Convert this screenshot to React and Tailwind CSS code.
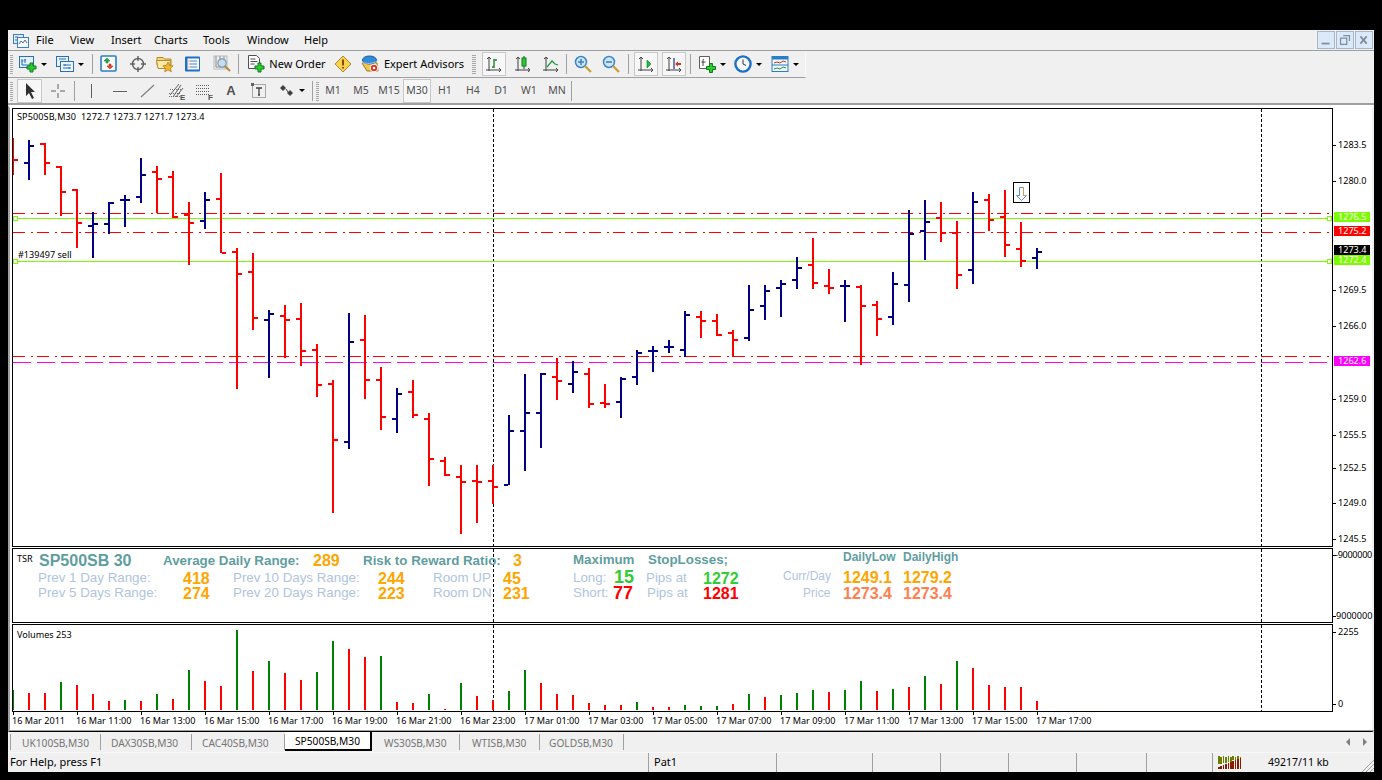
import React from 'react';

// x, high, low, open, close in screen px
const BARS = [
  [13,138,175,160,160],[29,140,180,163,146],[45,143,175,144,163],[61,166,216,167,192],[77,189,248,190,223],
  [93,212,258,226,224],[109,202,234,224,203],[125,195,227,200,200],[141,158,203,197,175],[157,166,213,172,179],
  [173,171,218,177,217],[189,202,265,215,223],[205,192,229,221,200],[221,173,253,199,253],[237,248,389,252,274],
  [253,253,330,272,318],[269,310,378,320,314],[285,305,358,316,320],[301,303,366,319,351],[317,344,397,350,385],
  [333,380,513,384,440],[349,313,449,442,342],[365,315,399,340,380],[381,367,430,380,417],[397,388,433,419,394],
  [413,380,418,392,415],[429,413,486,419,459],[445,457,476,461,475],[461,465,534,477,482],[477,465,523,481,482],
  [493,465,504,481,487],[509,415,485,485,431],[525,374,471,431,413],[541,373,448,413,374],[557,358,400,377,381],
  [573,361,393,384,372],[589,368,408,374,404],[605,384,408,403,404],[621,377,418,402,379],[637,350,385,377,353],
  [653,346,372,351,351],[669,340,353,347,347],[685,311,357,350,315],[701,311,338,317,321],[717,314,336,321,335],
  [733,330,357,333,340],[749,285,341,338,310],[765,285,320,306,291],[781,280,317,288,284],[797,257,289,280,268],
  [813,238,289,265,283],[829,269,294,286,288],[845,280,322,286,286],[861,285,365,287,306],[877,301,336,305,319],
  [893,272,325,317,284],[909,210,302,285,234],[925,200,260,231,222],[941,202,242,218,233],[957,221,289,233,275],
  [973,192,284,270,202],[989,194,231,200,220],[1005,190,257,217,245],[1021,222,267,249,261],[1037,248,269,258,252],
];

// top y of each volume bar, g = green
const VOLS = [
  [690,1],[693,0],[693,0],[682,1],[685,0],[694,0],[701,0],[700,1],[701,0],[694,1],[699,0],[670,1],[681,0],[686,0],
  [630,1],[671,0],[661,1],[673,0],[680,0],[672,1],[641,1],[649,0],[657,0],[656,1],[702,0],[703,0],[694,1],[709,0],
  [683,1],[696,0],[700,0],[691,1],[670,1],[683,0],[694,0],[695,0],[703,0],[705,0],[705,0],[702,1],[707,0],[707,0],
  [705,1],[706,1],[706,1],[704,0],[694,1],[697,0],[695,1],[693,1],[690,1],[692,0],[690,1],[681,1],[691,0],[689,1],
  [687,0],[676,1],[684,0],[661,1],[668,0],[685,0],[687,0],[687,0],[701,0],
];

const PRICE_LABELS = [
  ['1283.5',145],['1280.0',181],['1269.5',290],['1266.0',326],['1259.0',399],['1255.5',435],['1252.5',468],['1249.0',503],['1245.5',539],
];
const PRICE_BADGES = [
  ['1276.5',212,'bg-[#7cfc00]'],['1275.2',226,'bg-[#ff0000]'],['1273.4',245,'bg-black'],['1272.4',255,'bg-[#7cfc00]'],['1262.6',356,'bg-[#ff00ff]'],
];
const TIMES = [
  '16 Mar 2011','16 Mar 11:00','16 Mar 13:00','16 Mar 15:00','16 Mar 17:00','16 Mar 19:00','16 Mar 21:00','16 Mar 23:00',
  '17 Mar 01:00','17 Mar 03:00','17 Mar 05:00','17 Mar 07:00','17 Mar 09:00','17 Mar 11:00','17 Mar 13:00','17 Mar 15:00','17 Mar 17:00',
];

const UI = "font-['Noto_Sans',sans-serif]";
const ARIAL = "font-['Liberation_Sans',Arial,sans-serif]";

// ---- toolbar icons ----
const Ico = ({ children, w = 18, h = 18 }) => (
  <svg className="shrink-0" width={w} height={h} viewBox={`0 0 ${w} ${h}`}>{children}</svg>
);
const Plus = ({ x = 0, y = 0 }) => (
  <path transform={`translate(${x} ${y})`} d="M3.5.5h3v3h3v3h-3v3h-3v-3h-3v-3h3z" fill="#2ecb2e" stroke="#0b7d1a" />
);
const Caret = () => <span className="ml-[4px] h-0 w-0 shrink-0 border-x-[3px] border-t-[3px] border-x-transparent border-t-black" />;
const Axes = ({ children }) => (
  <Ico w={20} h={18}>
    <path d="M5 2v14M2 15h15M5 2l-2 2M5 2l2 2M17 15l-2-2M17 15l-2 2" stroke="#404040" fill="none" />
    {children}
  </Ico>
);

const IcoApp = () => (
  <Ico w={16} h={16}>
    <rect x=".5" y="2.5" width="10" height="9" fill="#dfeafa" stroke="#3f7fc0" />
    <rect x="4.5" y="5.5" width="11" height="10" fill="#f4f8fd" stroke="#3f7fc0" />
    <path d="M6 12l2-3 2 2 2-3 2 3" stroke="#4a6fa0" fill="none" />
    <path d="M2 5h3M2 8h2" stroke="#4a6fa0" />
  </Ico>
);
const IcoNewChart = () => (
  <Ico>
    <rect x=".5" y="1.5" width="14" height="11" fill="#e6f0fb" stroke="#2a6fb4" />
    <path d="M3 4v6M3 10h9M2.5 6h2M6 4v4M5 5h2" stroke="#2a6fb4" fill="none" />
    <Plus x="7.5" y="7.5" />
  </Ico>
);
const IcoProfiles = () => (
  <Ico>
    <rect x=".5" y="1.5" width="12" height="10" fill="#e6f0fb" stroke="#2a6fb4" />
    <rect x="4.5" y="6.5" width="13" height="10" fill="#eef5fd" stroke="#2a6fb4" />
    <path d="M3 4h7M7 10h8M7 13h8M9 9v2M13 12v2" stroke="#2a6fb4" fill="none" />
  </Ico>
);
const IcoMarket = () => (
  <Ico>
    <rect x="1" y="1" width="15" height="15" rx="1" fill="#f6f9fd" stroke="#2a7fc4" strokeWidth="1.6" />
    <path d="M7 3l3 3H8v2H6V6H4z" fill="#1fae3a" stroke="#0b7d1a" strokeWidth=".5" />
    <path d="M10 14l3-3h-2V9H9v2H7z" fill="#e8452c" stroke="#a82010" strokeWidth=".5" />
  </Ico>
);
const IcoNav = () => (
  <Ico>
    <circle cx="9" cy="9" r="5.5" fill="none" stroke="#606060" strokeWidth="1.4" />
    <path d="M9 1v5M9 12v5M1 9h5M12 9h5" stroke="#606060" strokeWidth="1.4" />
  </Ico>
);
const IcoFolder = () => (
  <Ico>
    <path d="M1 5V2.5h6L8.5 4H15v6H1z" fill="#f6d67a" stroke="#b48a2a" />
    <path d="M.5 5.5h14l-1 8H2z" fill="#fbe9a8" stroke="#b48a2a" />
    <path d="M12 7l1.6 3.4 3.6.4-2.7 2.4.8 3.6-3.3-1.9-3.3 1.9.8-3.6-2.7-2.4 3.6-.4z" fill="#f4b52a" stroke="#a87810" strokeWidth=".7" />
  </Ico>
);
const IcoTerminal = () => (
  <Ico>
    <rect x="1" y="1.5" width="15" height="15" rx="1" fill="#1f6fc4" />
    <rect x="3.5" y="3.5" width="11.5" height="11" fill="#f7fafe" />
    <path d="M6 6h7M6 9h7M6 12h7" stroke="#4a86c8" />
    <path d="M4.5 6h1M4.5 9h1M4.5 12h1" stroke="#e04a30" />
  </Ico>
);
const IcoTester = () => (
  <Ico>
    <path d="M3 1v11h10" stroke="#8a8a8a" fill="none" />
    <path d="M7 1v4M11 1v3" stroke="#8a8a8a" />
    <rect x="1" y="1" width="13" height="13" fill="none" stroke="#b8b8b8" />
    <circle cx="9" cy="8" r="4.2" fill="#c6dcef" stroke="#7d9cb8" strokeWidth="1.2" />
    <path d="M12 11l5 5" stroke="#b88a3a" strokeWidth="2" />
  </Ico>
);
const IcoOrder = () => (
  <Ico>
    <path d="M1.5.5h8l3 3v10h-11z" fill="#fff" stroke="#505050" />
    <path d="M3.5 4h5M3.5 6.5h7M3.5 9h4" stroke="#505050" />
    <Plus x="7.5" y="7.5" />
  </Ico>
);
const IcoAlert = () => (
  <Ico>
    <path d="M9 1l8 8-8 8-8-8z" fill="#fbd34a" stroke="#a88a3a" />
    <path d="M9 4.5v6M9 12v1.5" stroke="#7a3a10" strokeWidth="1.8" />
  </Ico>
);
const IcoEA = () => (
  <Ico>
    <path d="M1 8l5 8h11l-1-8-7-2z" fill="#f3c84a" stroke="#9a7a20" />
    <ellipse cx="8.5" cy="5" rx="7" ry="4" fill="#2f8ad8" stroke="#1a5a9c" />
    <path d="M1 7c4 2 11 2 15-1" stroke="#9fd0f4" fill="none" />
    <circle cx="13" cy="13" r="3.8" fill="#d8321c" stroke="#fff" />
    <circle cx="13" cy="13" r="1.3" fill="#fff" />
  </Ico>
);
const IcoBarChart = () => (
  <Axes><path d="M10 4v9M10 5h3M8 12h2" stroke="#1a8a2a" strokeWidth="1.4" fill="none" /></Axes>
);
const IcoCandle = () => (
  <Axes>
    <path d="M11 1v13" stroke="#303030" />
    <rect x="9" y="3" width="4" height="8" fill="#2ecb2e" stroke="#0b7d1a" />
  </Axes>
);
const IcoLine = () => <Axes><path d="M6 12l5-6 3 3 3 1" stroke="#1a9a3a" strokeWidth="1.2" fill="none" /></Axes>;
const IcoZoom = ({ plus }) => (
  <Ico>
    <circle cx="7" cy="7" r="5.5" fill="#cfe4f6" stroke="#3a86c8" strokeWidth="1.5" />
    <path d="M4 7h6" stroke="#3a86c8" strokeWidth="1.6" />
    {plus && <path d="M7 4v6" stroke="#3a86c8" strokeWidth="1.6" />}
    <path d="M11 11l6 6" stroke="#c8a23a" strokeWidth="2.4" />
  </Ico>
);
const IcoAuto = () => <Axes><path d="M11 5l4 4-4 4z" fill="#1fbf3a" stroke="#0b7d1a" strokeWidth=".6" /></Axes>;
const IcoShift = () => (
  <Axes>
    <path d="M10 3v11" stroke="#203090" strokeWidth="1.2" />
    <path d="M11 9l3-2.5V8h3v2h-3v1.5z" fill="#d8321c" />
  </Axes>
);
const IcoIndicators = () => (
  <Ico>
    <path d="M1.5 1.5h10v12h-10z" fill="#fff" stroke="#606060" />
    <path d="M6 4c-1 0-1 1-1 2v5M3.5 7h4" stroke="#404040" fill="none" />
    <Plus x="8" y="8" />
  </Ico>
);
const IcoClock = () => (
  <Ico>
    <circle cx="9" cy="9" r="7.6" fill="#f4f8fc" stroke="#1f6fc4" strokeWidth="2.4" />
    <path d="M9 4.5V9l3 1.5" stroke="#303030" fill="none" />
  </Ico>
);
const IcoTemplates = () => (
  <Ico>
    <rect x="1" y="1.5" width="16" height="15" fill="#f4f8fc" stroke="#2a7fc4" />
    <rect x="1" y="1.5" width="16" height="3" fill="#2a7fc4" />
    <rect x="1" y="9.5" width="16" height="1" fill="#2a7fc4" />
    <path d="M3 8l3-1 3 1 3-2 3 1" stroke="#c8381c" fill="none" />
    <path d="M3 14l3-1 3 1 3-2 3 1" stroke="#1a9a3a" fill="none" />
  </Ico>
);

// ---- second toolbar icons ----
const IcoCursor = () => (
  <Ico w={14} h={18}>
    <path d="M3 1v13l3-3 3 6 2-1-3-6h4z" fill="#303030" />
  </Ico>
);
const IcoCross = () => <Ico><path d="M9 2v5M9 11v5M2 9h5M11 9h5" stroke="#606060" /></Ico>;
const IcoVLine = () => <Ico><path d="M9.5 2v14" stroke="#606060" /></Ico>;
const IcoHLine = () => <Ico><path d="M2 9.5h14" stroke="#606060" /></Ico>;
const IcoTrend = () => <Ico><path d="M2 15L15 3" stroke="#808080" strokeWidth="1.2" /></Ico>;
const IcoFibChan = () => (
  <svg className="shrink-0" width="20" height="24" viewBox="0 0 20 24">
    <path d="M3 14.5h12M4 10.5h12M3 17.5h12" stroke="#707070" strokeDasharray="1 1" />
    <path d="M4 16L13 5M7 18L15 6M10 18L17 9" stroke="#606060" fill="none" />
    <text x="14" y="21" fontSize="8" fontWeight="700" fill="#505050" fontFamily="Liberation Sans">E</text>
  </svg>
);
const IcoFib = () => (
  <svg className="shrink-0" width="20" height="24" viewBox="0 0 20 24">
    <path d="M2 6.5h13M2 9.5h13M2 12.5h13M2 15.5h13" stroke="#606060" strokeDasharray="1 1" />
    <text x="14" y="21" fontSize="8" fontWeight="700" fill="#505050" fontFamily="Liberation Sans">F</text>
  </svg>
);
const IcoTextBox = () => (
  <Ico>
    <rect x="1.5" y="2.5" width="13" height="13" fill="none" stroke="#606060" strokeDasharray="1 1" />
    <rect x="0" y="1" width="3" height="3" fill="#606060" />
    <path d="M5 6h6M8 6v7M7 13h2" stroke="#404040" strokeWidth="1.3" />
  </Ico>
);
const IcoArrows = () => (
  <Ico w={16} h={16}>
    <path d="M3 2l3 3-3 3-3-3z" fill="#404040" transform="translate(1 0)" />
    <path d="M3 2l3 3-3 3-3-3z" fill="#404040" transform="translate(8 5)" />
    <path d="M7 6l2 3" stroke="#404040" />
  </Ico>
);

const Slot = ({ w = 'w-[24px]', className = '', active, children }) => (
  <div className={`flex h-[24px] shrink-0 items-center justify-center ${active ? 'border border-[#c8c8c8] bg-[#f7f7f7]' : ''} ${w} ${className}`}>
    {children}
  </div>
);
const Sep = ({ className = '' }) => <div className={`h-[20px] w-px shrink-0 bg-[#a0a0a0] ${className}`} />;
const Grip = ({ className = '' }) => <div className={`h-[20px] w-[3px] shrink-0 bg-[repeating-linear-gradient(0deg,#a8a8a8_0_1px,#f0f0f0_1px_2px)] ${className}`} />;

const TIMEFRAMES = ['M1', 'M5', 'M15', 'M30', 'H1', 'H4', 'D1', 'W1', 'MN'];
const TABS = [
  ['UK100SB,M30', 'w-[91px]', 'pl-[11px]'],
  ['DAX30SB,M30', 'w-[91px]', 'pl-[10px]'],
  ['CAC40SB,M30', 'w-[93px]', 'pl-[10px]'],
];
const TABS_AFTER = [
  ['WS30SB,M30', 'w-[88px]', 'pl-[12px]'],
  ['WTISB,M30', 'w-[80px]', 'pl-[12px]'],
  ['GOLDSB,M30', 'w-[84px]', 'pl-[9px]'],
];
const MENU = [
  ['File', 'w-[34px]'], ['View', 'w-[41px]'], ['Insert', 'w-[43px]'], ['Charts', 'w-[49px]'],
  ['Tools', 'w-[44px]'], ['Window', 'w-[57px]'], ['Help', 'w-[40px]'],
];

// indicator labels sit on the chart canvas, left = x-13, top = yc-8-549
const TSR = [
  ['SP500SB 30', 'left-[26px] top-[4px] text-[16px] font-bold text-[#5f9ea0]'],
  ['Average Daily Range:', 'left-[150px] top-[4px] text-[13.33px] font-bold text-[#5f9ea0]'],
  ['289', 'left-[300px] top-[4px] text-[16px] font-bold text-[#ffa500]'],
  ['Risk to Reward Ratio:', 'left-[350px] top-[4px] text-[13.33px] font-bold text-[#5f9ea0]'],
  ['3', 'left-[500px] top-[4px] text-[16px] font-bold text-[#ffa500]'],
  ['Prev 1 Day Range:', 'left-[25px] top-[21px] text-[13.33px] text-[#b0c4de]'],
  ['418', 'left-[170px] top-[22px] text-[16px] font-bold text-[#ffa500]'],
  ['Prev 5 Days Range:', 'left-[25px] top-[36px] text-[13.33px] text-[#b0c4de]'],
  ['274', 'left-[170px] top-[37px] text-[16px] font-bold text-[#ffa500]'],
  ['Prev 10 Days Range:', 'left-[220px] top-[21px] text-[13.33px] text-[#b0c4de]'],
  ['244', 'left-[365px] top-[22px] text-[16px] font-bold text-[#ffa500]'],
  ['Prev 20 Days Range:', 'left-[220px] top-[36px] text-[13.33px] text-[#b0c4de]'],
  ['223', 'left-[365px] top-[37px] text-[16px] font-bold text-[#ffa500]'],
  ['Room UP', 'left-[420px] top-[21px] text-[13.33px] text-[#b0c4de]'],
  ['45', 'left-[490px] top-[22px] text-[16px] font-bold text-[#ffa500]'],
  ['Room DN', 'left-[420px] top-[36px] text-[13.33px] text-[#b0c4de]'],
  ['231', 'left-[490px] top-[37px] text-[16px] font-bold text-[#ffa500]'],
  ['Maximum', 'left-[560px] top-[3px] text-[13.33px] font-bold text-[#5f9ea0]'],
  ['StopLosses;', 'left-[635px] top-[3px] text-[13.33px] font-bold text-[#5f9ea0]'],
  ['Long:', 'left-[560px] top-[21px] text-[13.33px] text-[#b0c4de]'],
  ['15', 'left-[601px] top-[21px] text-[18px] font-bold text-[#32cd32]'],
  ['Pips at', 'left-[633px] top-[21px] text-[13.33px] text-[#b0c4de]'],
  ['1272', 'left-[690px] top-[22px] text-[16px] font-bold text-[#32cd32]'],
  ['Short:', 'left-[560px] top-[36px] text-[13.33px] text-[#b0c4de]'],
  ['77', 'left-[600px] top-[37px] text-[18px] font-bold text-[#ff0000]'],
  ['Pips at', 'left-[634px] top-[36px] text-[13.33px] text-[#b0c4de]'],
  ['1281', 'left-[690px] top-[37px] text-[16px] font-bold text-[#ff0000]'],
  ['DailyLow', 'left-[830px] top-[1px] text-[12px] font-bold text-[#5f9ea0]'],
  ['DailyHigh', 'left-[890px] top-[1px] text-[12px] font-bold text-[#5f9ea0]'],
  ['Curr/Day', 'left-[770px] top-[20px] text-[12px] text-[#b0c4de]'],
  ['Price', 'left-[790px] top-[37px] text-[12px] text-[#b0c4de]'],
  ['1249.1', 'left-[830px] top-[21px] text-[16px] font-bold text-[#ffa500]'],
  ['1279.2', 'left-[890px] top-[21px] text-[16px] font-bold text-[#ffa500]'],
  ['1273.4', 'left-[830px] top-[37px] text-[16px] font-bold text-[#ff7f50]'],
  ['1273.4', 'left-[890px] top-[37px] text-[16px] font-bold text-[#ff7f50]'],
];

// horizontal objects drawn dash by dash, pattern = on/off lengths
function HLine({ y, color, pattern }) {
  const out = [];
  let x = 13;
  let i = 0;
  while (x < 1330) {
    const len = pattern ? pattern[i % pattern.length] : 1317;
    if (i % 2 === 0) out.push(<rect key={x} x={x} y={y} width={Math.min(len, 1330 - x)} height="1" fill={color} />);
    x += len;
    i += 1;
  }
  return <>{out}</>;
}

const DASHDOT = [12, 6, 2, 4];

const VGrid = ({ y1, y2 }) => (
  <g stroke="#000" strokeDasharray="3 2">
    <line x1="493.5" x2="493.5" y1={y1} y2={y2} />
    <line x1="1261.5" x2="1261.5" y1={y1} y2={y2} />
  </g>
);

function PriceChart() {
  return (
    <svg className="absolute inset-0 block" width="1319" height="437" viewBox="13 109 1319 437" shapeRendering="crispEdges">
      <VGrid y1="109" y2="546" />
      <HLine y={213} color="#ff0000" pattern={DASHDOT} />
      <HLine y={232} color="#ff0000" pattern={DASHDOT} />
      <HLine y={356} color="#ff0000" pattern={DASHDOT} />
      <HLine y={362} color="#ff00ff" pattern={[18, 6]} />
      <HLine y={218} color="#7cfc00" />
      <HLine y={261} color="#7cfc00" />
      <g stroke="#7cfc00" fill="#fff">
        <rect x="13.5" y="216.5" width="4" height="4" />
        <rect x="13.5" y="259.5" width="4" height="4" />
        <rect x="1327.5" y="216.5" width="4" height="4" />
        <rect x="1327.5" y="259.5" width="4" height="4" />
      </g>
      {BARS.map(([x, hi, lo, o, c]) => {
        const col = c < o ? '#000080' : c > o ? '#ff0000' : x === 13 ? '#ff0000' : '#000080';
        return (
          <g key={x} fill={col}>
            <rect x={x - 1} y={hi} width="2" height={lo - hi} />
            {x > 13 && <rect x={x - 5} y={o - 1} width="4" height="2" />}
            <rect x={x + 1} y={c - 1} width="4" height="2" />
          </g>
        );
      })}
      <rect x="1013.5" y="182.5" width="16" height="20" fill="#fff" stroke="#000" />
      <path d="M1019.5 187.5h4v8h3l-5 5-5-5h3z" fill="#fff" stroke="#5a90c8" shapeRendering="auto" />
      <path d="M1023.5 187.5v8h3" fill="none" stroke="#d89a50" shapeRendering="auto" />
    </svg>
  );
}

function VolumeChart() {
  return (
    <svg className="absolute inset-0 block" width="1319" height="86" viewBox="13 625 1319 86" shapeRendering="crispEdges">
      <VGrid y1="625" y2="711" />
      {VOLS.map(([top, g], i) => (
        <rect key={i} x={12 + i * 16} y={top} width="2" height={710 - top} fill={g ? '#008000' : '#ff0000'} />
      ))}
    </svg>
  );
}

const ScaleTick = ({ y }) => <span className="absolute left-0 h-px w-[3px] bg-black" style={{ top: y }} />;

export default function App() {
  return (
    <div className="h-screen overflow-hidden bg-black pl-[8px] pt-[30px]">
      <div className={`flex h-[742px] w-[1366px] flex-col bg-[#f0f0f0] text-black ${UI}`}>

        {/* Menu */}
        <div className="flex h-[21px] shrink-0 items-center border-b border-[#a0a0a0] pl-[5px] pr-[1px] text-[11px]">
          <IcoApp />
          <div className="ml-[7px] flex">
            {MENU.map(([t, w]) => <span key={t} className={`shrink-0 ${w}`}>{t}</span>)}
          </div>
          <div className="ml-auto flex gap-px">
            {[
              <path key="a" d="M3 12h9v2H3z" fill="#7d8ea2" />,
              <path key="b" d="M3 7h7v7H3zM6 4h7v6" fill="none" stroke="#7d8ea2" strokeWidth="1.4" />,
              <path key="c" d="M4 5l7 8M11 5l-7 8" stroke="#7d8ea2" strokeWidth="2" />,
            ].map((d, i) => (
              <div key={i} className="flex h-[18px] w-[18px] items-center justify-center border border-[#a6b7c9] bg-[#dce9f8]">
                <svg width="16" height="16" viewBox="0 0 16 18">{d}</svg>
              </div>
            ))}
          </div>
        </div>

        {/* Standard toolbar */}
        <div className="flex h-[27px] w-[798px] shrink-0 items-center border-b border-r border-b-[#a0a0a0] border-r-[#f8f8f8] pl-[2px] text-[11px]">
          <Grip />
          <Slot w="w-[31px]" className="ml-[4px]"><IcoNewChart /><Caret /></Slot>
          <Slot w="w-[32px]" className="ml-[6px]"><IcoProfiles /><Caret /></Slot>
          <Sep className="ml-[6px]" />
          <Slot className="ml-[4px]"><IcoMarket /></Slot>
          <Slot className="ml-[5px]"><IcoNav /></Slot>
          <Slot className="ml-[3px]"><IcoFolder /></Slot>
          <Slot className="ml-[4px]"><IcoTerminal /></Slot>
          <Slot className="ml-[5px]"><IcoTester /></Slot>
          <Sep className="ml-[4px]" />
          <Slot w="w-[85px]" className="ml-[5px]"><IcoOrder /><span className="ml-[4px] whitespace-nowrap">New Order</span></Slot>
          <Slot className="ml-[2px]"><IcoAlert /></Slot>
          <Slot w="w-[109px]" className="ml-[3px]"><IcoEA /><span className="ml-[5px] whitespace-nowrap">Expert Advisors</span></Slot>
          <Grip className="ml-[5px] w-[4px]" />
          <Slot active className="ml-[6px]"><IcoBarChart /></Slot>
          <Slot className="ml-[5px]"><IcoCandle /></Slot>
          <Slot className="ml-[4px]"><IcoLine /></Slot>
          <Sep className="ml-[3px]" />
          <Slot className="ml-[4px]"><IcoZoom plus /></Slot>
          <Slot className="ml-[4px]"><IcoZoom /></Slot>
          <Sep className="ml-[5px]" />
          <Slot active className="ml-[5px]"><IcoAuto /></Slot>
          <Slot active className="ml-[4px]"><IcoShift /></Slot>
          <Sep className="ml-[4px]" />
          <Slot w="w-[31px]" className="ml-[5px]"><IcoIndicators /><Caret /></Slot>
          <Slot w="w-[30px]" className="ml-[6px]"><IcoClock /><Caret /></Slot>
          <Slot w="w-[30px]" className="ml-[7px]"><IcoTemplates /><Caret /></Slot>
        </div>

        {/* Line studies + timeframes */}
        <div className="flex h-[27px] shrink-0 items-center border-b-2 border-[#a0a0a0] pl-[2px] text-[10.5px] text-[#505050]">
          <Grip />
          <Slot active w="w-[25px]" className="ml-[4px]"><IcoCursor /></Slot>
          <Slot w="w-[25px]" className="ml-[3px]"><IcoCross /></Slot>
          <Sep className="ml-[4px]" />
          <Slot className="ml-[4px]"><IcoVLine /></Slot>
          <Slot className="ml-[5px]"><IcoHLine /></Slot>
          <Slot className="ml-[4px]"><IcoTrend /></Slot>
          <Slot className="ml-[4px]"><IcoFibChan /></Slot>
          <Slot className="ml-[4px]"><IcoFib /></Slot>
          <Slot className={`ml-[3px] text-[13px] font-bold ${ARIAL}`}>A</Slot>
          <Slot className="ml-[5px]"><IcoTextBox /></Slot>
          <Slot w="w-[31px]" className="ml-[4px]"><IcoArrows /><Caret /></Slot>
          <Sep className="ml-[5px]" />
          <Grip className="ml-[3px]" />
          {TIMEFRAMES.map((t) => (
            <Slot key={t} active={t === 'M30'} w="w-[28px]">{t}</Slot>
          ))}
          <Sep />
        </div>

        {/* Chart window */}
        <div className={`flex h-[627px] shrink-0 flex-col border-b border-l-2 border-r-2 border-t-[3px] border-b-black border-l-[#a0a0a0] border-r-[#f0f0f0] border-t-white bg-white pl-[2px] text-[9.1px] leading-[12px] ${UI}`}>

          {/* main panel */}
          <div className="flex h-[439px] shrink-0">
            <div className="relative h-full w-[1321px] border border-black">
              <PriceChart />
              <span className="absolute left-[4px] top-[2px] whitespace-pre tracking-[0.1px]">SP500SB,M30  1272.7 1273.7 1271.7 1273.4</span>
              <span className="absolute left-[5px] top-[140px]">#139497 sell</span>
            </div>
            <div className="relative flex-1">
              {PRICE_LABELS.map(([t, y]) => (
                <React.Fragment key={t}>
                  <ScaleTick y={y - 108} />
                  <span className="absolute left-[5px]" style={{ top: y - 114 }}>{t}</span>
                </React.Fragment>
              ))}
              {PRICE_BADGES.map(([t, y, bg]) => (
                <span key={t} className={`absolute left-px flex h-[10px] w-[36px] items-center pl-[4px] leading-[10px] text-white ${bg}`} style={{ top: y - 108 }}>{t}</span>
              ))}
            </div>
          </div>

          {/* TSR indicator panel */}
          <div className="mt-px flex h-[75px] shrink-0">
            <div className="relative h-full w-[1321px] border border-black">
              <svg className="absolute inset-0 block" width="1319" height="73" viewBox="13 549 1319 73" shapeRendering="crispEdges">
                <VGrid y1="549" y2="622" />
              </svg>
              <span className="absolute left-[4px] top-[4px]">TSR</span>
              {TSR.map(([t, cls], i) => (
                <span key={i} className={`absolute whitespace-nowrap leading-[15px] ${ARIAL} ${cls}`}>{t}</span>
              ))}
            </div>
            <div className="relative flex-1">
              <ScaleTick y={7} />
              <ScaleTick y={68} />
              <span className="absolute left-[2px] top-[1px] tracking-[-0.3px]">-9000000</span>
              <span className="absolute left-[3px] top-[62px]">9000000</span>
            </div>
          </div>

          {/* Volumes panel */}
          <div className="mt-px flex h-[88px] shrink-0">
            <div className="relative h-full w-[1321px] border border-black">
              <VolumeChart />
              <span className="absolute left-[4px] top-[4px]">Volumes 253</span>
            </div>
            <div className="relative flex-1">
              <ScaleTick y={8} />
              <ScaleTick y={80} />
              <span className="absolute left-[5px] top-[2px]">2255</span>
              <span className="absolute left-[5px] top-[74px]">0</span>
            </div>
          </div>

          {/* Time axis */}
          <div className="flex h-[17px] shrink-0">
            {TIMES.map((t) => (
              <div key={t} className="relative w-[64px] shrink-0 whitespace-nowrap pt-[3px]">
                <span className="absolute left-px top-0 h-[3px] w-px bg-black" />
                {t}
              </div>
            ))}
          </div>
          <div className="-ml-[4px] mr-[-2px] mt-auto h-px bg-[#a0a0a0]" />
        </div>

        {/* Tabs */}
        <div className="flex h-[20px] shrink-0 items-stretch pl-[2px] text-[10.2px] leading-[18px] text-[#757575]">
          {TABS.map(([t, w, pl], i) => (
            <div key={t} className={`my-[2px] shrink-0 border-r border-[#a0a0a0] ${w} ${pl} ${i === 0 ? 'border-l' : ''}`}>{t}</div>
          ))}
          <div className="h-[19px] w-[87px] shrink-0 border-b-2 border-r-2 border-black bg-white pl-[10px] text-black">SP500SB,M30</div>
          {TABS_AFTER.map(([t, w, pl]) => (
            <div key={t} className={`my-[2px] shrink-0 border-r border-[#a0a0a0] ${w} ${pl}`}>{t}</div>
          ))}
          <div className="ml-auto flex items-center gap-[13px] pr-[7px]">
            <span className="h-0 w-0 border-y-[4px] border-r-[4px] border-y-transparent border-r-[#808080]" />
            <span className="h-0 w-0 border-y-[4px] border-l-[4px] border-y-transparent border-l-[#808080]" />
          </div>
        </div>

        {/* Status bar */}
        <div className="flex h-[20px] shrink-0 items-center border-t border-[#f8f8f8] pl-[2px] text-[11px] text-black">
          <span className="w-[638px] shrink-0">For Help, press F1</span>
          <div className="flex h-full w-[128px] shrink-0 items-center border-l border-[#a0a0a0] pl-[5px]">Pat1</div>
          {['w-[96px]', 'w-[68px]', 'w-[68px]', 'w-[68px]', 'w-[70px]', 'w-[66px]'].map((w, i) => (
            <div key={i} className={`h-full shrink-0 border-l border-[#a0a0a0] ${w}`} />
          ))}
          <div className="flex h-full flex-1 items-center border-l border-[#a0a0a0] pl-[5px]">
            <svg width="24" height="13" viewBox="0 0 24 13" shapeRendering="crispEdges">
              {[0, 1, 2, 3, 4, 5, 6, 7, 8, 9].map((i) => (
                <g key={i}>
                  <rect x={i * 2.4} y={i % 2 ? 1 : 0} width="1.6" height={8 - i * 0.6} fill="#6b7f00" />
                  <rect x={i * 2.4} y={11 - i} width="1.6" height={2 + i} fill="#8b1a00" />
                </g>
              ))}
            </svg>
            <span className="ml-[26px] text-[10.5px]">49217/11 kb</span>
            <svg className="ml-auto" width="12" height="18" viewBox="0 0 12 18">
              <path d="M0 18L12 6M4 18L12 10M8 18L12 14" stroke="#a8a8a8" />
            </svg>
          </div>
        </div>
      </div>
    </div>
  );
}
